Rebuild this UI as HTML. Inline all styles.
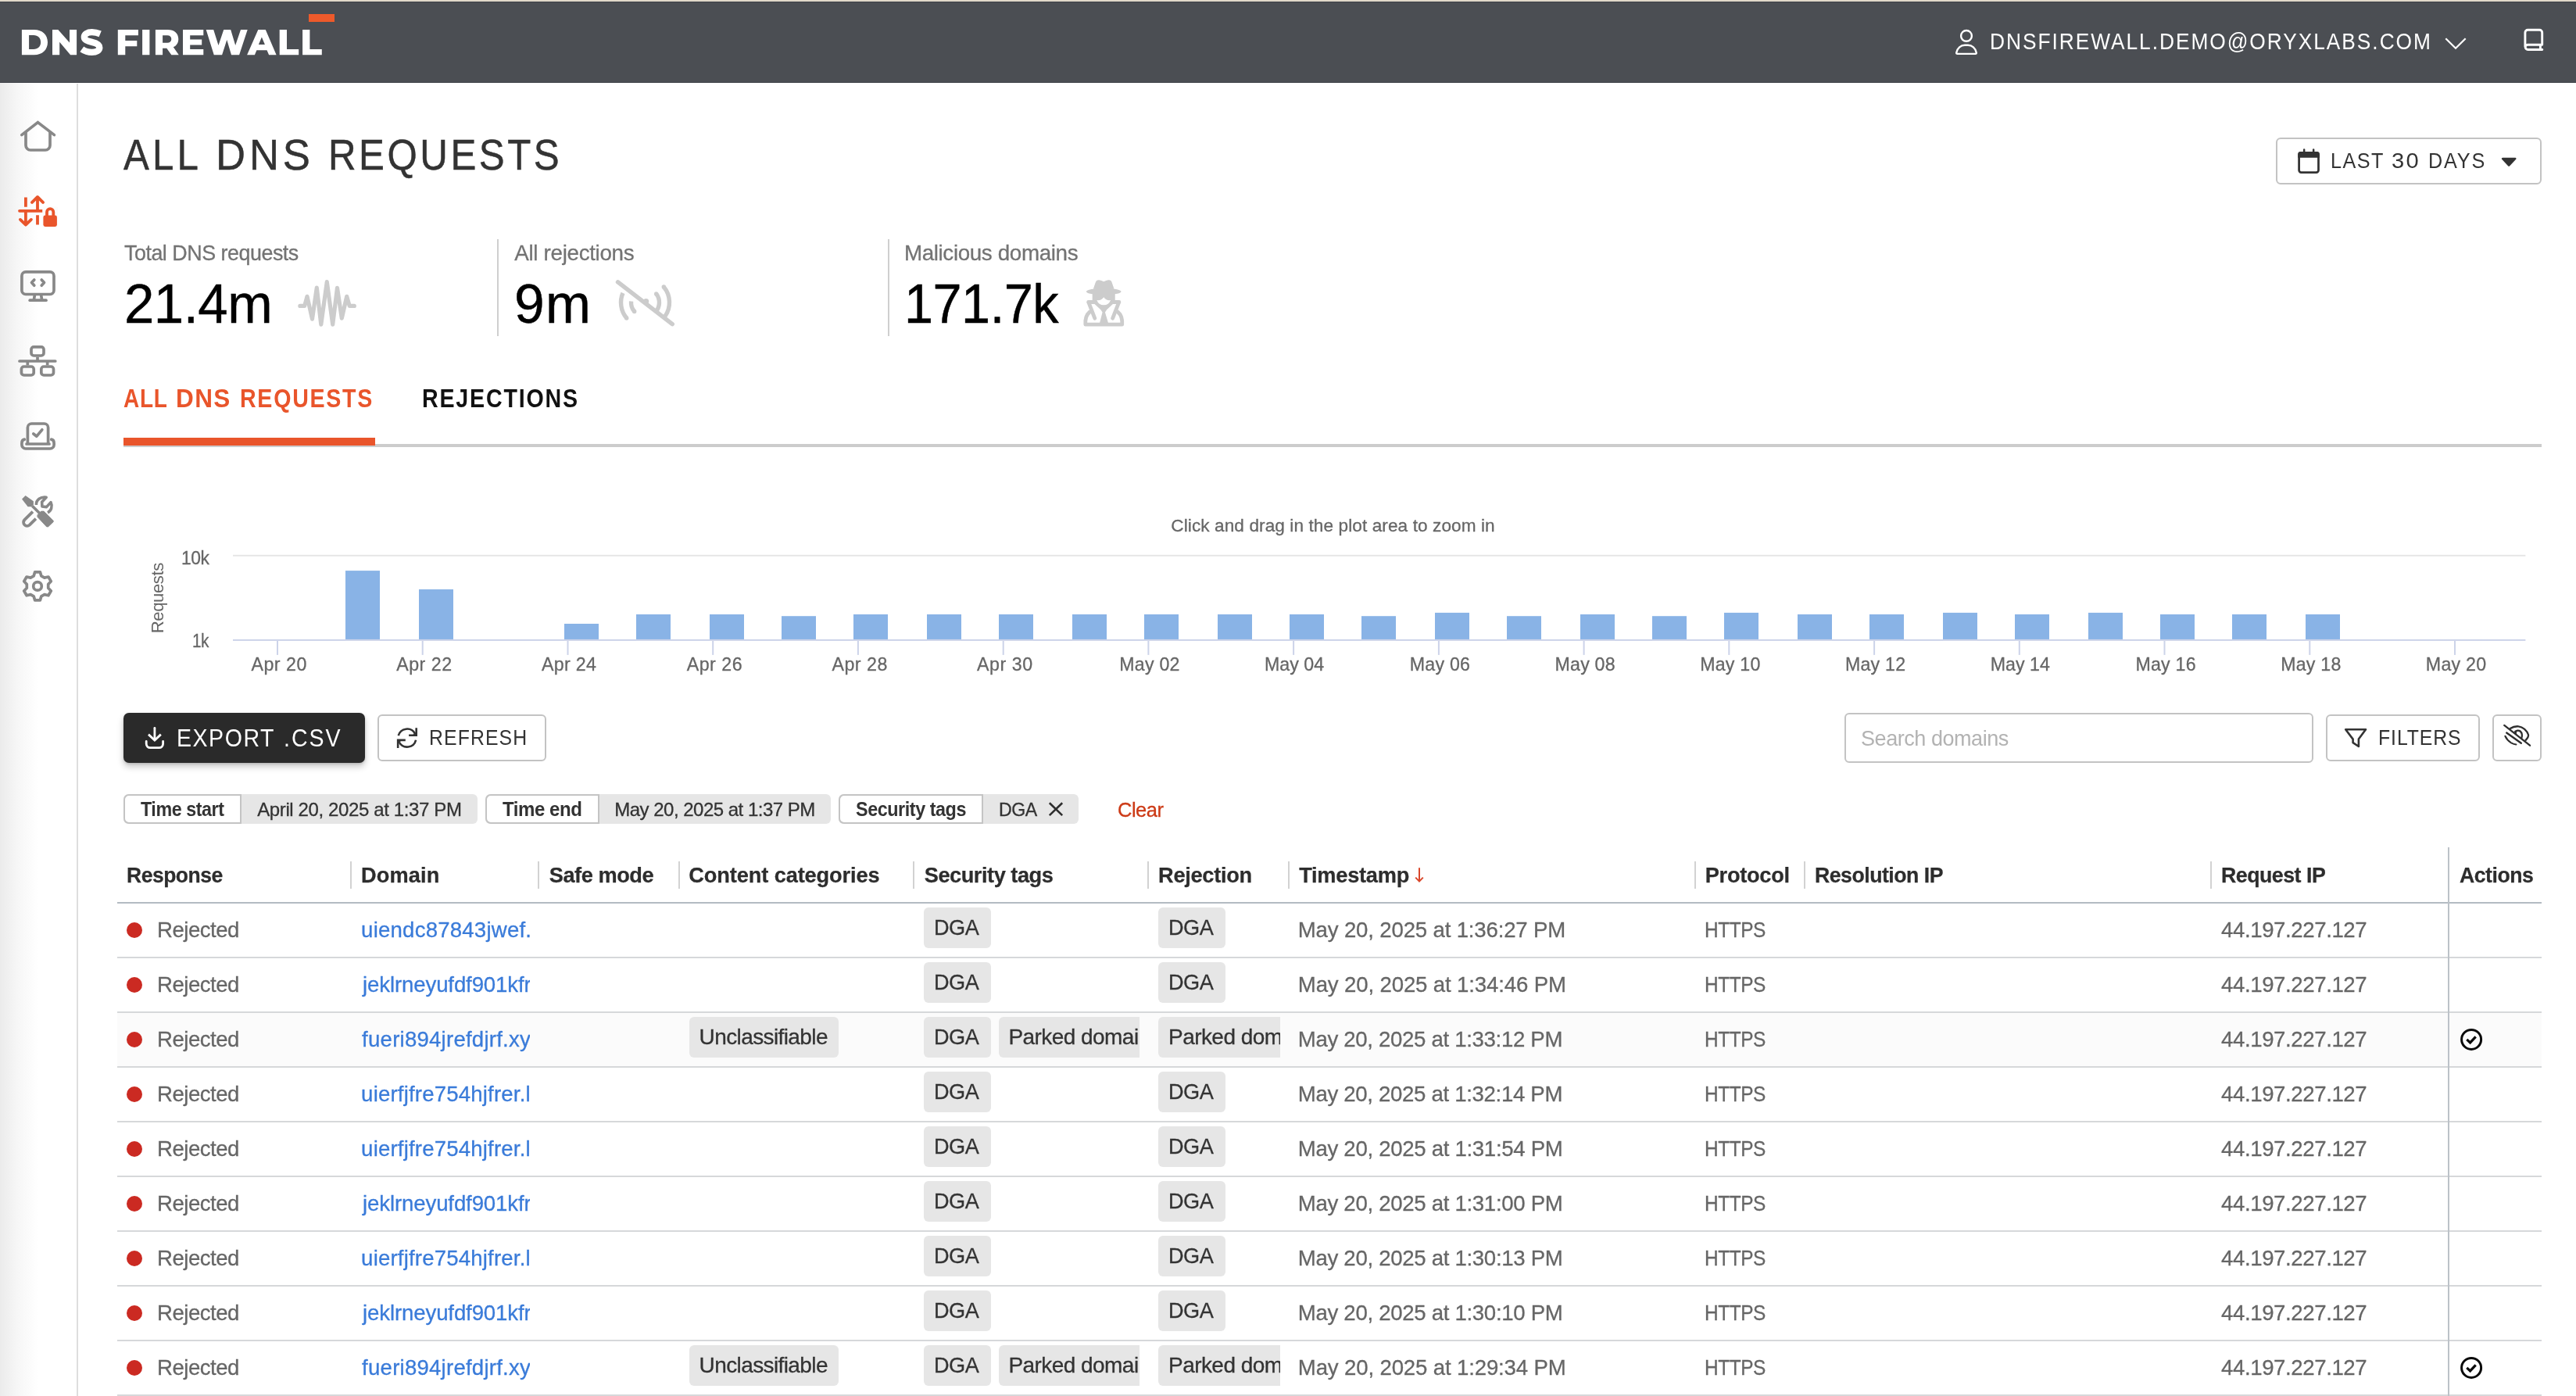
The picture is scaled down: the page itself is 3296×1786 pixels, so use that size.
<!DOCTYPE html><html lang="en"><head><meta charset="utf-8"><title>DNS Firewall - All DNS Requests</title><style>
*{box-sizing:border-box}
html,body{margin:0;padding:0}
body{width:3296px;height:1786px;overflow:hidden;background:#fff;font-family:"Liberation Sans",sans-serif;position:relative}
.a{position:absolute}
.t{position:absolute;white-space:nowrap;line-height:1}
.clip{position:absolute;overflow:hidden}
.btn{position:absolute;border:2px solid #c3c3c3;border-radius:6px;background:#fff}
.tag{position:absolute;background:#e6e6e6;border-radius:6px;height:51.5px}
.sep{position:absolute;width:2px;background:#d2d2d2;top:1102px;height:35px}
.rl{position:absolute;left:150px;width:3102px;height:2px;background:#d6d8da}
svg{position:absolute;left:0;top:0;overflow:visible;will-change:transform}
</style></head><body><header class="a" style="left:0;top:0;width:3296px;height:106px;background:#4b4e53;border-bottom:1px solid #3f4248"></header><div class="a" style="left:0px;top:0px;width:3296px;height:2px;background:linear-gradient(#ddd4c5,#e8dfd0)"></div><div class="a" style="left:0px;top:2px;width:3296px;height:1px;background:#3d4046"></div><div class="a" style="left:394.9px;top:18px;width:33.1px;height:9.7px;background:#ee5a2b"></div><nav class="a" style="left:0;top:106px;width:98px;height:1680px;background:linear-gradient(90deg,#ebebeb 0%,#f6f6f6 22%,#fff 50%)"></nav><div class="a" style="left:98px;top:107px;width:2px;height:1679px;background:#dedede"></div><div class="btn" style="left:2912px;top:176px;width:340px;height:60px;"></div><div class="a" style="left:636px;top:306px;width:2px;height:124px;background:#cfcfcf"></div><div class="a" style="left:1136px;top:306px;width:2px;height:124px;background:#cfcfcf"></div><div class="a" style="left:158px;top:568.2px;width:3094px;height:4px;background:#cccccc"></div><div class="a" style="left:158px;top:560px;width:322px;height:9.8px;background:#e9552b"></div><div class="a" style="left:158px;top:912px;width:309px;height:64px;background:#2a2a2a;border-radius:7px;box-shadow:0 5px 9px rgba(0,0,0,.22),0 1px 3px rgba(0,0,0,.15)"></div><div class="btn" style="left:483px;top:914px;width:216px;height:60px;"></div><div class="btn" style="left:2360px;top:912px;width:600px;height:64px;"></div><div class="btn" style="left:2976px;top:914px;width:197px;height:60px;"></div><div class="btn" style="left:3189px;top:914px;width:63px;height:60px;"></div><div class="a" style="left:158px;top:1016px;width:453px;height:38px;background:#e6e6e6;border-radius:6px"></div><div class="a" style="left:158px;top:1016px;width:151px;height:38px;background:#fff;border:2px solid #c4c4c4;border-radius:7px 0 0 7px"></div><div class="a" style="left:621px;top:1016px;width:442.29999999999995px;height:38px;background:#e6e6e6;border-radius:6px"></div><div class="a" style="left:621px;top:1016px;width:145.5px;height:38px;background:#fff;border:2px solid #c4c4c4;border-radius:7px 0 0 7px"></div><div class="a" style="left:1073.3px;top:1016px;width:306.70000000000005px;height:38px;background:#e6e6e6;border-radius:6px"></div><div class="a" style="left:1073.3px;top:1016px;width:184.4000000000001px;height:38px;background:#fff;border:2px solid #c4c4c4;border-radius:7px 0 0 7px"></div><div class="sep" style="left:448px"></div><div class="sep" style="left:688px"></div><div class="sep" style="left:868px"></div><div class="sep" style="left:1168px"></div><div class="sep" style="left:1468px"></div><div class="sep" style="left:1648px"></div><div class="sep" style="left:2168px"></div><div class="sep" style="left:2308px"></div><div class="sep" style="left:2828px"></div><div class="a" style="left:150px;top:1296px;width:3102px;height:69px;background:#fbfbfb"></div><div class="a" style="left:150px;top:1154px;width:3102px;height:2px;background:#b3bbc2"></div><div class="rl" style="top:1224px"></div><div class="rl" style="top:1294px"></div><div class="rl" style="top:1364px"></div><div class="rl" style="top:1434px"></div><div class="rl" style="top:1504px"></div><div class="rl" style="top:1574px"></div><div class="rl" style="top:1644px"></div><div class="rl" style="top:1714px"></div><div class="rl" style="top:1784px"></div><div class="a" style="left:3132px;top:1084px;width:2px;height:702px;background:#bcc2c8"></div><div class="a" style="left:161.8px;top:1179.8px;width:20.4px;height:20.4px;background:#cb2a22;border-radius:50%"></div><div class="tag" style="left:1182.2px;top:1161.2px;width:85.7px"></div><div class="tag" style="left:1482.1px;top:1161.2px;width:85.7px"></div><div class="a" style="left:161.8px;top:1249.8px;width:20.4px;height:20.4px;background:#cb2a22;border-radius:50%"></div><div class="tag" style="left:1182.2px;top:1231.2px;width:85.7px"></div><div class="tag" style="left:1482.1px;top:1231.2px;width:85.7px"></div><div class="a" style="left:161.8px;top:1319.8px;width:20.4px;height:20.4px;background:#cb2a22;border-radius:50%"></div><div class="tag" style="left:1182.2px;top:1301.2px;width:85.7px"></div><div class="tag" style="left:882.1px;top:1301.2px;width:190.5px"></div><div class="tag" style="left:1277.9px;top:1301.2px;width:179.8px;border-radius:6px 0 0 6px"></div><div class="tag" style="left:1482.1px;top:1301.2px;width:155.8px;border-radius:6px 0 0 6px"></div><div class="a" style="left:161.8px;top:1389.8px;width:20.4px;height:20.4px;background:#cb2a22;border-radius:50%"></div><div class="tag" style="left:1182.2px;top:1371.2px;width:85.7px"></div><div class="tag" style="left:1482.1px;top:1371.2px;width:85.7px"></div><div class="a" style="left:161.8px;top:1459.8px;width:20.4px;height:20.4px;background:#cb2a22;border-radius:50%"></div><div class="tag" style="left:1182.2px;top:1441.2px;width:85.7px"></div><div class="tag" style="left:1482.1px;top:1441.2px;width:85.7px"></div><div class="a" style="left:161.8px;top:1529.8px;width:20.4px;height:20.4px;background:#cb2a22;border-radius:50%"></div><div class="tag" style="left:1182.2px;top:1511.2px;width:85.7px"></div><div class="tag" style="left:1482.1px;top:1511.2px;width:85.7px"></div><div class="a" style="left:161.8px;top:1599.8px;width:20.4px;height:20.4px;background:#cb2a22;border-radius:50%"></div><div class="tag" style="left:1182.2px;top:1581.2px;width:85.7px"></div><div class="tag" style="left:1482.1px;top:1581.2px;width:85.7px"></div><div class="a" style="left:161.8px;top:1669.8px;width:20.4px;height:20.4px;background:#cb2a22;border-radius:50%"></div><div class="tag" style="left:1182.2px;top:1651.2px;width:85.7px"></div><div class="tag" style="left:1482.1px;top:1651.2px;width:85.7px"></div><div class="a" style="left:161.8px;top:1739.8px;width:20.4px;height:20.4px;background:#cb2a22;border-radius:50%"></div><div class="tag" style="left:1182.2px;top:1721.2px;width:85.7px"></div><div class="tag" style="left:882.1px;top:1721.2px;width:190.5px"></div><div class="tag" style="left:1277.9px;top:1721.2px;width:179.8px;border-radius:6px 0 0 6px"></div><div class="tag" style="left:1482.1px;top:1721.2px;width:155.8px;border-radius:6px 0 0 6px"></div><svg width="3296" height="1786" viewBox="0 0 3296 1786"><path fill="#fff" fill-rule="evenodd" d="M27.9,37.9 H43.6 C54.2,37.9 61,44.4 61,54.1 C61,63.8 54.2,70.3 43.6,70.3 H27.9 Z M37.1,45 V63 H43 C48.6,63 52.1,59.6 52.1,54.1 C52.1,48.5 48.6,45 43,45 Z M67,37.9 H74.35 L89,54.6 V37.9 H98.1 V70.3 H90.1 L76.2,53.8 V70.3 H67 Z M150.8,37.9 H176.9 V45.2 H160.3 V52 H175.3 V59.3 H160.3 V70.3 H150.8 Z M182.1,37.9 H191.4 V70.3 H182.1 Z M198.9,37.9 H214.5 C223,37.9 228.3,42.6 228.3,49.9 C228.3,54.8 225.8,58.4 221.8,60.3 L228.8,70.3 H219.3 L213.3,61.7 H208.1 V70.3 H198.9 Z M208.1,45.2 V54.7 H214 C217.3,54.7 219.3,52.9 219.3,49.95 C219.3,47 217.3,45.2 214,45.2 Z M234,37.9 H260.3 V45.2 H243.2 V50.4 H258.2 V57.4 H243.2 V62.9 H260.3 V70.3 H234 Z M263.7,37.9 H273.2 L279.5,58 L286.25,37.9 H295.2 L301.2,58 L308,37.9 H316.7 L306.1,70.3 H296 L290.3,50.9 L284.1,70.3 H273.75 Z M330.3,37.9 H339.8 L353.6,70.3 H344.1 L341.5,64.2 H328.4 L325.9,70.3 H316.1 Z M334.9,47.4 L330.9,56.9 H338.9 Z M357.7,37.9 H367 V62.9 H382.2 V70.3 H357.7 Z M387.1,37.9 H396.4 V62.9 H411.8 V70.3 H387.1 Z"/><path d="M128.2,43.4 C124.8,42 121.2,41.2 117.6,41.2 C111.5,41.2 107.8,43.7 107.8,47.3 C107.8,51.1 111.6,52.5 117.5,53.9 C123.6,55.3 127.3,57 127.3,60.9 C127.3,64.5 123.5,66.9 117.5,66.9 C113,66.9 108.4,65.5 104.8,62.9" fill="none" stroke="#fff" stroke-width="8.3" stroke-linecap="butt" stroke-linejoin="round" /><circle cx="2516" cy="45.9" r="6.9" fill="none" stroke="#fff" stroke-width="2.4"/><path d="M2503.2,67.5 C2504.2,61.5 2509,57.7 2514,57.7 H2518 C2523,57.7 2527.8,61.5 2528.8,67.5 Q2529,68.9 2527.6,68.9 H2504.4 Q2503,68.9 2503.2,67.5 Z" fill="none" stroke="#fff" stroke-width="2.4" stroke-linecap="round" stroke-linejoin="round" /><path d="M3129.3,49.3 L3142,61.7 L3154.7,49.3" fill="none" stroke="#fff" stroke-width="2.3" stroke-linecap="butt" stroke-linejoin="miter" /><path d="M3230.9,59.8 V41.7 a3.4,3.4 0 0 1 3.4,-3.4 H3249.3 a3.4,3.4 0 0 1 3.4,3.4 V57.2 H3234.3 a3.15,3.15 0 0 0 0,6.3 H3252.8 M3250.4,57.2 V63.5" fill="none" stroke="#fff" stroke-width="2.9" stroke-linecap="round" stroke-linejoin="round" /><path d="M27.8,172.6 L48.4,156.6 L69.4,172.6" fill="none" stroke="#888888" stroke-width="3.7" stroke-linecap="round" stroke-linejoin="miter" /><path d="M33,168.5 V186 a6,6 0 0 0 6,6 H58 a6,6 0 0 0 6,-6 V168.5" fill="none" stroke="#888888" stroke-width="3.7" stroke-linecap="butt" stroke-linejoin="round" /><path d="M32.9,252.6 V264.8 M48,275.2 V287.6" fill="none" stroke="#e9552b" stroke-width="3.8" stroke-linecap="butt" stroke-linejoin="round" /><path d="M25,269.85 H55.5" fill="none" stroke="#e9552b" stroke-width="3.8" stroke-linecap="round" stroke-linejoin="round" /><path d="M32.9,271 V287.4 M25.9,280.9 L32.9,287.7 L39.9,280.9" fill="none" stroke="#e9552b" stroke-width="3.8" stroke-linecap="round" stroke-linejoin="round" /><path d="M48,269 V252.2 M41,258.9 L48,251.9 L55,258.9" fill="none" stroke="#e9552b" stroke-width="3.8" stroke-linecap="round" stroke-linejoin="round" /><rect x="54.2" y="264" width="19.9" height="27" rx="3" fill="#fcfcfc"/><rect x="55.4" y="275.6" width="17.5" height="14.3" rx="2.4" fill="#e9552b"/><path d="M60,277 V271.2 a4.15,4.15 0 0 1 8.3,0 V277" fill="none" stroke="#e9552b" stroke-width="3.8" stroke-linecap="butt" stroke-linejoin="round" /><rect x="27.9" y="347.9" width="41.1" height="28.6" rx="5" fill="none" stroke="#888888" stroke-width="3.7"/><path d="M44.4,377.5 L43.4,383.5 M52.6,377.5 L53.6,383.5" fill="none" stroke="#888888" stroke-width="3.7" stroke-linecap="butt" stroke-linejoin="round" /><path d="M38.2,384.2 H59" fill="none" stroke="#888888" stroke-width="3.7" stroke-linecap="round" stroke-linejoin="round" /><path d="M43.8,358 L40.5,361.6 L43.8,365.2 M53.2,358 L56.5,361.6 L53.2,365.2" fill="none" stroke="#888888" stroke-width="3.7" stroke-linecap="round" stroke-linejoin="round" /><rect x="40" y="443.9" width="16" height="11.1" rx="3.2" fill="none" stroke="#888888" stroke-width="3.7"/><rect x="27.4" y="469" width="15.8" height="11" rx="3.2" fill="none" stroke="#888888" stroke-width="3.7"/><rect x="52.8" y="469" width="15.7" height="11" rx="3.2" fill="none" stroke="#888888" stroke-width="3.7"/><path d="M25,462 H70.8" fill="none" stroke="#888888" stroke-width="3.7" stroke-linecap="round" stroke-linejoin="round" /><path d="M48,456.8 V462 M35.3,462 V467.2 M60.65,462 V467.2" fill="none" stroke="#888888" stroke-width="3.7" stroke-linecap="butt" stroke-linejoin="round" /><path d="M35.4,568 V547 a5,5 0 0 1 5,-5 H56.6 a5,5 0 0 1 5,5 V568" fill="none" stroke="#888888" stroke-width="3.7" stroke-linecap="butt" stroke-linejoin="round" /><path d="M34,568 H63" fill="none" stroke="#888888" stroke-width="3.7" stroke-linecap="round" stroke-linejoin="round" /><path d="M42.8,555 L46.9,558.2 L53.8,549.8" fill="none" stroke="#888888" stroke-width="3.7" stroke-linecap="round" stroke-linejoin="round" /><path d="M31.3,562.2 C28.6,562.6 27.9,565 27.9,567 V569 a5,5 0 0 0 5,5 H64.1 a5,5 0 0 0 5,-5 V567 C69.1,565 68.4,562.6 65.7,562.2" fill="none" stroke="#888888" stroke-width="3.7" stroke-linecap="round" stroke-linejoin="round" /><path d="M28.05,638.6 L32.6,634.05 L42.85,641.3 L42.85,645.85 L40.1,648.35 L35.6,648.35 Z" fill="#888888" /><path d="M41.2,647.2 L50.6,656.6" fill="none" stroke="#888888" stroke-width="3.6" stroke-linecap="butt" stroke-linejoin="round" /><path d="M48.1,658.6 L52.6,654.1 L56.1,654.1 L68.2,666.15 L68.2,667.7 L61.65,673.9 L59.65,673.9 L48.1,661.6 Z" fill="#888888" stroke="#888888" stroke-width="0.8" stroke-linecap="round" stroke-linejoin="round" /><path d="M41.9,654.7 L31.3,665.1 a4.6,4.6 0 0 0 6.5,6.5 L45.9,663.6" fill="none" stroke="#888888" stroke-width="3.8" stroke-linecap="butt" stroke-linejoin="round" /><path d="M46.4,646 C46,639.5 52,635.2 59.2,636.2 L53.6,642.2 L53.9,648 L59.5,648.6 L65,642.6 C67.6,648 65.5,653.5 61,655.8" fill="none" stroke="#888888" stroke-width="3.6" stroke-linecap="butt" stroke-linejoin="round" /><path d="M43.13,736.88 L44.67,731.91 L51.33,731.91 L52.87,736.88 L56.84,739.17 L61.92,738.02 L65.25,743.79 L61.71,747.61 L61.71,752.19 L65.25,756.01 L61.92,761.78 L56.84,760.63 L52.87,762.92 L51.33,767.89 L44.67,767.89 L43.13,762.92 L39.16,760.63 L34.08,761.78 L30.75,756.01 L34.29,752.19 L34.29,747.61 L30.75,743.79 L34.08,738.02 L39.16,739.17 Z" fill="none" stroke="#888888" stroke-width="3.7" stroke-linecap="round" stroke-linejoin="round" /><circle cx="48" cy="749.9" r="5.3" fill="none" stroke="#888888" stroke-width="3.7"/><rect x="2941.6" y="195.4" width="24.9" height="25.2" rx="2.8" fill="none" stroke="#333" stroke-width="2.76"/><path d="M2940.2,201.8 V197.2 a3.2,3.2 0 0 1 3.2,-3.2 H2964.7 a3.2,3.2 0 0 1 3.2,3.2 V201.8 Z" fill="#333" /><path d="M2948.15,191.4 V195 M2960.15,191.4 V195" fill="none" stroke="#333" stroke-width="2.5" stroke-linecap="round" stroke-linejoin="round" /><path d="M3202,203 H3218.3 L3210.15,211.6 Z" fill="#333" stroke="#333" stroke-width="2.4" stroke-linecap="round" stroke-linejoin="round" /><path d="M383.9,391.4 L389.7,391.4 L393,379.3 L399.5,408.2 L405.3,368 L410.8,415.2 L418.3,360.7 L425.7,415.2 L431.5,368.3 L437.3,407.2 L443.7,379.3 L447.2,391.4 L453.3,391.4" fill="none" stroke="#cccccc" stroke-width="5.2" stroke-linecap="round" stroke-linejoin="round" /><path d="M796.96,374.89 A31,31 0 0 0 801.75,406.93" fill="none" stroke="#cccccc" stroke-width="5.4" stroke-linecap="butt" stroke-linejoin="round" /><path d="M807.57,385.43 A18,18 0 0 0 811.71,398.57" fill="none" stroke="#cccccc" stroke-width="5.4" stroke-linecap="butt" stroke-linejoin="round" /><path d="M849.25,367.07 A31,31 0 0 1 850.89,404.78" fill="none" stroke="#cccccc" stroke-width="5.4" stroke-linecap="butt" stroke-linejoin="round" /><path d="M839.68,375.92 A18,18 0 0 1 838.88,399.04" fill="none" stroke="#cccccc" stroke-width="5.4" stroke-linecap="butt" stroke-linejoin="round" /><circle cx="801.75" cy="406.93" r="2.7" fill="#cccccc"/><circle cx="811.71" cy="398.57" r="2.7" fill="#cccccc"/><circle cx="849.25" cy="367.07" r="2.7" fill="#cccccc"/><circle cx="839.68" cy="375.92" r="2.7" fill="#cccccc"/><circle cx="826.6" cy="385.6" r="3.6" fill="#cccccc"/><path d="M790.6,360.9 L860.2,414.6" fill="none" stroke="#cccccc" stroke-width="5.6" stroke-linecap="round" stroke-linejoin="round" /><path d="M1398.81,369.78 L1401.67,361.47 Q1402.93,357.74 1406.37,358.20 Q1409.24,358.89 1412.22,360.32 Q1415.20,358.89 1418.18,358.20 Q1421.56,357.74 1422.70,361.47 L1425.57,369.78 Z" fill="#cccccc" /><ellipse cx="1412.22" cy="372.99" rx="22.35" ry="4.36" fill="#cccccc"/><path d="M1397.66,374.93 H1426.72 V385.82 H1397.66 Z" fill="#cccccc" /><path d="M1398.92,387.54 L1425.57,387.54 L1416.11,396.14 L1413.94,399.58 L1417.95,413.04 L1407.12,413.04 L1410.56,399.58 L1408.38,396.14 Z" fill="#cccccc" /><path d="M1392.62,386.51 L1431.87,386.51" fill="none" stroke="#cccccc" stroke-width="4.813753581661891" stroke-linecap="round" stroke-linejoin="round" /><path d="M1393.19,387.54 L1400.76,407.14 M1431.30,387.54 L1423.68,407.14" fill="none" stroke="#cccccc" stroke-width="4.813753581661891" stroke-linecap="round" stroke-linejoin="round" /><path d="M1394.22,399.12 C1389.30,403.30 1388.49,409.89 1388.84,415.16 L1435.71,415.16 C1436.06,409.89 1435.26,403.30 1430.33,399.12" fill="none" stroke="#cccccc" stroke-width="4.813753581661891" stroke-linecap="round" stroke-linejoin="round" /><path d="M1403.39,383.99 Q1408.66,384.96 1412.22,380.21 Q1415.77,384.96 1421.04,383.99 Q1418.69,390.29 1412.22,390.29 Q1405.74,390.29 1403.39,383.99 Z" fill="#fff" /><rect x="298" y="709.8" width="2933.4" height="2" fill="#e6e6e6"/><rect x="442" y="730.1" width="44" height="87.9" fill="#89b3e6"/><rect x="536" y="754" width="44" height="64.0" fill="#89b3e6"/><rect x="722" y="798" width="44" height="20.0" fill="#89b3e6"/><rect x="814" y="786" width="44" height="32.0" fill="#89b3e6"/><rect x="908" y="786" width="44" height="32.0" fill="#89b3e6"/><rect x="1000" y="788.2" width="44" height="29.8" fill="#89b3e6"/><rect x="1092" y="786" width="44" height="32.0" fill="#89b3e6"/><rect x="1186" y="786" width="44" height="32.0" fill="#89b3e6"/><rect x="1278" y="786" width="44" height="32.0" fill="#89b3e6"/><rect x="1372" y="786" width="44" height="32.0" fill="#89b3e6"/><rect x="1464" y="786" width="44" height="32.0" fill="#89b3e6"/><rect x="1558" y="786" width="44" height="32.0" fill="#89b3e6"/><rect x="1650" y="786" width="44" height="32.0" fill="#89b3e6"/><rect x="1742" y="788.2" width="44" height="29.8" fill="#89b3e6"/><rect x="1836" y="783.9" width="44" height="34.1" fill="#89b3e6"/><rect x="1928" y="788.2" width="44" height="29.8" fill="#89b3e6"/><rect x="2022" y="786" width="44" height="32.0" fill="#89b3e6"/><rect x="2114" y="788.2" width="44" height="29.8" fill="#89b3e6"/><rect x="2206" y="783.9" width="44" height="34.1" fill="#89b3e6"/><rect x="2300" y="786" width="44" height="32.0" fill="#89b3e6"/><rect x="2392" y="786" width="44" height="32.0" fill="#89b3e6"/><rect x="2486" y="783.9" width="44" height="34.1" fill="#89b3e6"/><rect x="2578" y="786" width="44" height="32.0" fill="#89b3e6"/><rect x="2672" y="783.9" width="44" height="34.1" fill="#89b3e6"/><rect x="2764" y="786" width="44" height="32.0" fill="#89b3e6"/><rect x="2856" y="786" width="44" height="32.0" fill="#89b3e6"/><rect x="2950" y="786" width="44" height="32.0" fill="#89b3e6"/><rect x="298" y="817.9" width="2933.4" height="2" fill="#ccd3e9"/><rect x="354.0" y="819.9" width="2" height="18" fill="#ccd3e9"/><rect x="539.7" y="819.9" width="2" height="18" fill="#ccd3e9"/><rect x="725.5" y="819.9" width="2" height="18" fill="#ccd3e9"/><rect x="911.2" y="819.9" width="2" height="18" fill="#ccd3e9"/><rect x="1096.9" y="819.9" width="2" height="18" fill="#ccd3e9"/><rect x="1282.7" y="819.9" width="2" height="18" fill="#ccd3e9"/><rect x="1468.4" y="819.9" width="2" height="18" fill="#ccd3e9"/><rect x="1654.1" y="819.9" width="2" height="18" fill="#ccd3e9"/><rect x="1839.9" y="819.9" width="2" height="18" fill="#ccd3e9"/><rect x="2025.6" y="819.9" width="2" height="18" fill="#ccd3e9"/><rect x="2211.3" y="819.9" width="2" height="18" fill="#ccd3e9"/><rect x="2397.1" y="819.9" width="2" height="18" fill="#ccd3e9"/><rect x="2582.8" y="819.9" width="2" height="18" fill="#ccd3e9"/><rect x="2768.5" y="819.9" width="2" height="18" fill="#ccd3e9"/><rect x="2954.3" y="819.9" width="2" height="18" fill="#ccd3e9"/><rect x="3140.0" y="819.9" width="2" height="18" fill="#ccd3e9"/><text transform="translate(208.5,765) rotate(-90)" text-anchor="middle" font-family="Liberation Sans" font-size="22.2" fill="#666" textLength="90.7" lengthAdjust="spacing">Requests</text><path d="M197.9,931.3 V946" fill="none" stroke="#fff" stroke-width="2.8" stroke-linecap="round" stroke-linejoin="round" /><path d="M191,940.6 L197.9,947 L204.8,940.6" fill="none" stroke="#fff" stroke-width="2.8" stroke-linecap="square" stroke-linejoin="miter" /><path d="M187.2,948.4 V951.6 a5,5 0 0 0 5,5 H203.6 a5,5 0 0 0 5,-5 V948.4" fill="none" stroke="#fff" stroke-width="2.8" stroke-linecap="round" stroke-linejoin="round" /><path d="M509.79,941.12 A11.5,11.5 0 0 1 530.96,938.52" fill="none" stroke="#333" stroke-width="2.6" stroke-linecap="butt" stroke-linejoin="round" /><path d="M532.11,946.69 A11.5,11.5 0 0 1 510.75,949.50" fill="none" stroke="#333" stroke-width="2.6" stroke-linecap="butt" stroke-linejoin="round" /><path d="M532.7,931.2 V940.8 H523.1" fill="none" stroke="#333" stroke-width="2.6" stroke-linecap="butt" stroke-linejoin="miter" /><path d="M509.15,956.9 V946.9 H518.8" fill="none" stroke="#333" stroke-width="2.6" stroke-linecap="butt" stroke-linejoin="miter" /><path d="M532.7,940.8 L532.7,936.5 L529.5,939 L527.5,940.8 Z M509.15,946.9 L509.15,951 L512,949 L514,946.9 Z" fill="#333" /><path d="M3001.2,933.3 H3027 L3017.9,945.6 V955 L3010.6,950.2 V945.6 Z" fill="none" stroke="#333" stroke-width="2.6" stroke-linecap="round" stroke-linejoin="round" /><path d="M3204.2,927.9 L3237,953.7" fill="none" stroke="#2e2e2e" stroke-width="2.3" stroke-linecap="round" stroke-linejoin="round" /><path d="M3211.3,932.3 C3215,930 3219,929 3222.3,929.3 C3228.2,929.9 3233.2,934.6 3235,940 C3235.6,942.6 3233.2,945.4 3231,947.6" fill="none" stroke="#2e2e2e" stroke-width="2.3" stroke-linecap="butt" stroke-linejoin="round" /><path d="M3217.6,936.3 C3219.5,934.6 3222.6,934 3224.6,935.5 C3227,937.5 3227.4,941.5 3226.2,944.6" fill="none" stroke="#2e2e2e" stroke-width="2.4" stroke-linecap="butt" stroke-linejoin="round" /><path d="M3215.2,936.9 L3220,935.4 L3220,940.4 Z" fill="#2e2e2e" /><path d="M3207.2,937.6 L3225.8,950.8" fill="none" stroke="#2e2e2e" stroke-width="2.4" stroke-linecap="round" stroke-linejoin="round" /><path d="M3205.4,941.8 C3207,945.4 3210,948.5 3213,950.3 C3215.4,951.6 3217.5,952.3 3219.4,952.5" fill="none" stroke="#2e2e2e" stroke-width="2.1" stroke-linecap="round" stroke-linejoin="round" /><path d="M1342.8,1027.3 L1359.2,1043.1 M1359.2,1027.3 L1342.8,1043.1" fill="none" stroke="#2e2e2e" stroke-width="2.6" stroke-linecap="butt" stroke-linejoin="round" /><path d="M1816,1110.2 V1127.4 M1811.2,1122.6 L1816,1127.6 L1820.8,1122.6" fill="none" stroke="#d9472b" stroke-width="2" stroke-linecap="butt" stroke-linejoin="miter" /><circle cx="3162.1" cy="1329.9" r="12.5" fill="none" stroke="#0a0a0a" stroke-width="3"/><path d="M3156.3,1329.8 L3160.6,1333.9 L3167.7,1326.3" fill="none" stroke="#0a0a0a" stroke-width="3.2" stroke-linecap="butt" stroke-linejoin="miter" /><circle cx="3162.1" cy="1749.9" r="12.5" fill="none" stroke="#0a0a0a" stroke-width="3"/><path d="M3156.3,1749.8 L3160.6,1753.9 L3167.7,1746.3" fill="none" stroke="#0a0a0a" stroke-width="3.2" stroke-linecap="butt" stroke-linejoin="miter" /></svg><main style="position:absolute;left:0;top:0;width:3296px;height:1786px;will-change:transform"><span class="t" style="left:2545.86px;top:39px;font-size:28.6px;color:#fff;letter-spacing:2.129px;transform:scaleX(0.9200);transform-origin:0 0;">DNSFIREWALL.DEMO@ORYXLABS.COM</span><span class="t" style="left:158.00px;top:170px;font-size:56px;color:#333;letter-spacing:4.616px;transform:scaleX(0.8800);transform-origin:0 0;-webkit-text-stroke:0.5px #333;">ALL</span><span class="t" style="left:275.99px;top:170px;font-size:56px;color:#333;letter-spacing:5.202px;transform:scaleX(0.9400);transform-origin:0 0;-webkit-text-stroke:0.5px #333;">DNS</span><span class="t" style="left:419.68px;top:170px;font-size:56px;color:#333;letter-spacing:3.994px;transform:scaleX(0.8800);transform-origin:0 0;-webkit-text-stroke:0.5px #333;">REQUESTS</span><span class="t" style="left:2981.50px;top:192px;font-size:28px;color:#333;letter-spacing:1.618px;transform:scaleX(0.9000);transform-origin:0 0;">LAST</span><span class="t" style="left:3060.36px;top:192px;font-size:28px;color:#333;letter-spacing:2.255px;transform:scaleX(1.0400);transform-origin:0 0;">30</span><span class="t" style="left:3106.50px;top:192px;font-size:28px;color:#333;letter-spacing:2.058px;transform:scaleX(0.9000);transform-origin:0 0;">DAYS</span><span class="t" style="left:158.50px;top:310px;font-size:27.8px;color:#737373;letter-spacing:-0.500px;transform:scaleX(0.9667);transform-origin:0 0;-webkit-text-stroke:0.3px #737373;">Total DNS requests</span><span class="t" style="left:658.30px;top:310px;font-size:27.8px;color:#737373;letter-spacing:-0.329px;-webkit-text-stroke:0.3px #737373;">All rejections</span><span class="t" style="left:1156.90px;top:310px;font-size:27.8px;color:#737373;letter-spacing:-0.372px;-webkit-text-stroke:0.3px #737373;">Malicious domains</span><span class="t" style="left:158.82px;top:355px;font-size:69.5px;color:#000;letter-spacing:-0.500px;transform:scaleX(0.9920);transform-origin:0 0;-webkit-text-stroke:0.45px #000;">21.4m</span><span class="t" style="left:657.90px;top:355px;font-size:69.5px;color:#000;letter-spacing:1.447px;-webkit-text-stroke:0.45px #000;">9m</span><span class="t" style="left:1157.21px;top:355px;font-size:69.5px;color:#000;letter-spacing:-0.500px;transform:scaleX(0.9582);transform-origin:0 0;-webkit-text-stroke:0.45px #000;">171.7k</span><span class="t" style="left:157.50px;top:494px;font-size:32.5px;color:#e9552b;font-weight:bold;letter-spacing:0.932px;transform:scaleX(0.8600);transform-origin:0 0;">ALL</span><span class="t" style="left:224.96px;top:494px;font-size:32.5px;color:#e9552b;font-weight:bold;letter-spacing:1.463px;transform:scaleX(0.9700);transform-origin:0 0;">DNS</span><span class="t" style="left:307.34px;top:494px;font-size:32.5px;color:#e9552b;font-weight:bold;letter-spacing:1.953px;transform:scaleX(0.8800);transform-origin:0 0;">REQUESTS</span><span class="t" style="left:539.74px;top:494px;font-size:32.5px;color:#111;font-weight:bold;letter-spacing:2.058px;transform:scaleX(0.8800);transform-origin:0 0;">REJECTIONS</span><span class="t" style="left:1498.30px;top:662px;font-size:22.6px;color:#666666;letter-spacing:0.090px;-webkit-text-stroke:0.3px #666666;">Click and drag in the plot area to zoom in</span><span class="t" style="left:231.63px;top:703px;font-size:23.5px;color:#666666;letter-spacing:-0.500px;transform:scaleX(0.9712);transform-origin:0 0;-webkit-text-stroke:0.3px #666666;">10k</span><span class="t" style="left:246.02px;top:809px;font-size:23.5px;color:#666666;letter-spacing:-0.500px;transform:scaleX(0.8825);transform-origin:0 0;-webkit-text-stroke:0.3px #666666;">1k</span><span class="t" style="left:321.45px;top:839px;font-size:23.2px;color:#666666;letter-spacing:0.536px;-webkit-text-stroke:0.3px #666666;">Apr 20</span><span class="t" style="left:507.18px;top:839px;font-size:23.2px;color:#666666;letter-spacing:0.536px;-webkit-text-stroke:0.3px #666666;">Apr 22</span><span class="t" style="left:692.92px;top:839px;font-size:23.2px;color:#666666;letter-spacing:0.336px;-webkit-text-stroke:0.3px #666666;">Apr 24</span><span class="t" style="left:878.65px;top:839px;font-size:23.2px;color:#666666;letter-spacing:0.536px;-webkit-text-stroke:0.3px #666666;">Apr 26</span><span class="t" style="left:1064.39px;top:839px;font-size:23.2px;color:#666666;letter-spacing:0.536px;-webkit-text-stroke:0.3px #666666;">Apr 28</span><span class="t" style="left:1250.12px;top:839px;font-size:23.2px;color:#666666;letter-spacing:0.536px;-webkit-text-stroke:0.3px #666666;">Apr 30</span><span class="t" style="left:1432.25px;top:839px;font-size:23.2px;color:#666666;letter-spacing:0.231px;-webkit-text-stroke:0.3px #666666;">May 02</span><span class="t" style="left:1617.99px;top:839px;font-size:23.2px;color:#666666;letter-spacing:0.031px;-webkit-text-stroke:0.3px #666666;">May 04</span><span class="t" style="left:1803.72px;top:839px;font-size:23.2px;color:#666666;letter-spacing:0.231px;-webkit-text-stroke:0.3px #666666;">May 06</span><span class="t" style="left:1989.46px;top:839px;font-size:23.2px;color:#666666;letter-spacing:0.231px;-webkit-text-stroke:0.3px #666666;">May 08</span><span class="t" style="left:2175.19px;top:839px;font-size:23.2px;color:#666666;letter-spacing:0.231px;-webkit-text-stroke:0.3px #666666;">May 10</span><span class="t" style="left:2360.92px;top:839px;font-size:23.2px;color:#666666;letter-spacing:0.231px;-webkit-text-stroke:0.3px #666666;">May 12</span><span class="t" style="left:2546.66px;top:839px;font-size:23.2px;color:#666666;letter-spacing:0.031px;-webkit-text-stroke:0.3px #666666;">May 14</span><span class="t" style="left:2732.39px;top:839px;font-size:23.2px;color:#666666;letter-spacing:0.231px;-webkit-text-stroke:0.3px #666666;">May 16</span><span class="t" style="left:2918.13px;top:839px;font-size:23.2px;color:#666666;letter-spacing:0.231px;-webkit-text-stroke:0.3px #666666;">May 18</span><span class="t" style="left:3103.86px;top:839px;font-size:23.2px;color:#666666;letter-spacing:0.231px;-webkit-text-stroke:0.3px #666666;">May 20</span><span class="t" style="left:226.40px;top:929px;font-size:31.7px;color:#fff;letter-spacing:1.705px;transform:scaleX(0.9000);transform-origin:0 0;">EXPORT</span><span class="t" style="left:363.30px;top:929px;font-size:31.7px;color:#fff;letter-spacing:2.207px;transform:scaleX(0.9000);transform-origin:0 0;">.CSV</span><span class="t" style="left:549.04px;top:929px;font-size:28.2px;color:#333;letter-spacing:1.255px;transform:scaleX(0.8800);transform-origin:0 0;">REFRESH</span><span class="t" style="left:2380.63px;top:931px;font-size:28px;color:#b3b3b3;letter-spacing:-0.500px;transform:scaleX(0.9668);transform-origin:0 0;">Search domains</span><span class="t" style="left:3042.54px;top:929px;font-size:28.2px;color:#333;letter-spacing:1.044px;transform:scaleX(0.8800);transform-origin:0 0;">FILTERS</span><span class="t" style="left:179.80px;top:1022px;font-size:26.3px;color:#333;font-weight:bold;letter-spacing:-0.500px;transform:scaleX(0.8855);transform-origin:0 0;">Time start</span><span class="t" style="left:329.20px;top:1024px;font-size:24px;color:#333;letter-spacing:-0.381px;-webkit-text-stroke:0.3px #333;">April 20, 2025 at 1:37 PM</span><span class="t" style="left:643.10px;top:1022px;font-size:26.3px;color:#333;font-weight:bold;letter-spacing:-0.500px;transform:scaleX(0.9140);transform-origin:0 0;">Time end</span><span class="t" style="left:786.30px;top:1024px;font-size:24px;color:#333;letter-spacing:-0.512px;-webkit-text-stroke:0.3px #333;">May 20, 2025 at 1:37 PM</span><span class="t" style="left:1095.00px;top:1022px;font-size:26.3px;color:#333;font-weight:bold;letter-spacing:-0.500px;transform:scaleX(0.8888);transform-origin:0 0;">Security tags</span><span class="t" style="left:1278.44px;top:1024px;font-size:24px;color:#333;letter-spacing:-0.500px;transform:scaleX(0.9640);transform-origin:0 0;-webkit-text-stroke:0.3px #333;">DGA</span><span class="t" style="left:1429.83px;top:1023px;font-size:26.3px;color:#cc3a16;letter-spacing:-0.500px;transform:scaleX(0.9687);transform-origin:0 0;-webkit-text-stroke:0.3px #cc3a16;">Clear</span><span class="t" style="left:162.13px;top:1106px;font-size:27.2px;color:#2d2d2d;font-weight:bold;letter-spacing:-0.500px;transform:scaleX(0.9743);transform-origin:0 0;-webkit-text-stroke:0.25px #2d2d2d;">Response</span><span class="t" style="left:462.10px;top:1106px;font-size:27.2px;color:#2d2d2d;font-weight:bold;letter-spacing:0.122px;-webkit-text-stroke:0.25px #2d2d2d;">Domain</span><span class="t" style="left:702.80px;top:1106px;font-size:27.2px;color:#2d2d2d;font-weight:bold;letter-spacing:-0.471px;-webkit-text-stroke:0.25px #2d2d2d;">Safe mode</span><span class="t" style="left:881.30px;top:1106px;font-size:27.2px;color:#2d2d2d;font-weight:bold;letter-spacing:-0.113px;-webkit-text-stroke:0.25px #2d2d2d;">Content categories</span><span class="t" style="left:1182.80px;top:1106px;font-size:27.2px;color:#2d2d2d;font-weight:bold;letter-spacing:-0.477px;-webkit-text-stroke:0.25px #2d2d2d;">Security tags</span><span class="t" style="left:1482.10px;top:1106px;font-size:27.2px;color:#2d2d2d;font-weight:bold;letter-spacing:-0.295px;-webkit-text-stroke:0.25px #2d2d2d;">Rejection</span><span class="t" style="left:1662.20px;top:1106px;font-size:27.2px;color:#2d2d2d;font-weight:bold;letter-spacing:-0.242px;-webkit-text-stroke:0.25px #2d2d2d;">Timestamp</span><span class="t" style="left:2181.70px;top:1106px;font-size:27.2px;color:#2d2d2d;font-weight:bold;letter-spacing:-0.259px;-webkit-text-stroke:0.25px #2d2d2d;">Protocol</span><span class="t" style="left:2322.22px;top:1106px;font-size:27.2px;color:#2d2d2d;font-weight:bold;letter-spacing:-0.500px;transform:scaleX(0.9810);transform-origin:0 0;-webkit-text-stroke:0.25px #2d2d2d;">Resolution IP</span><span class="t" style="left:2841.62px;top:1106px;font-size:27.2px;color:#2d2d2d;font-weight:bold;letter-spacing:-0.500px;transform:scaleX(0.9832);transform-origin:0 0;-webkit-text-stroke:0.25px #2d2d2d;">Request IP</span><span class="t" style="left:3146.50px;top:1106px;font-size:27.2px;color:#2d2d2d;font-weight:bold;letter-spacing:-0.500px;transform:scaleX(0.9804);transform-origin:0 0;-webkit-text-stroke:0.25px #2d2d2d;">Actions</span><span class="t" style="left:201.10px;top:1176px;font-size:27.6px;color:#666666;letter-spacing:-0.523px;-webkit-text-stroke:0.3px #666666;">Rejected</span><div class="clip" style="left:463px;top:1170px;width:215.2px;height:41px"><span class="t" style="left:-0.90px;top:6px;font-size:27.6px;color:#3a7bd9;-webkit-text-stroke:0.3px #3a7bd9;letter-spacing:0.206px;">uiendc87843jwef.xyz</span></div><span class="t" style="left:1660.80px;top:1176px;font-size:27.6px;color:#666666;letter-spacing:-0.168px;-webkit-text-stroke:0.3px #666666;">May 20, 2025 at 1:36:27 PM</span><span class="t" style="left:2180.93px;top:1176px;font-size:27.6px;color:#666666;letter-spacing:-0.500px;transform:scaleX(0.8856);transform-origin:0 0;-webkit-text-stroke:0.3px #666666;">HTTPS</span><span class="t" style="left:2842.10px;top:1176px;font-size:27.6px;color:#666666;letter-spacing:-0.405px;-webkit-text-stroke:0.3px #666666;">44.197.227.127</span><span class="t" style="left:1195.26px;top:1173px;font-size:28px;color:#333;letter-spacing:-0.500px;transform:scaleX(0.9690);transform-origin:0 0;-webkit-text-stroke:0.3px #333;">DGA</span><span class="t" style="left:1495.16px;top:1173px;font-size:28px;color:#333;letter-spacing:-0.500px;transform:scaleX(0.9690);transform-origin:0 0;-webkit-text-stroke:0.3px #333;">DGA</span><span class="t" style="left:201.10px;top:1246px;font-size:27.6px;color:#666666;letter-spacing:-0.523px;-webkit-text-stroke:0.3px #666666;">Rejected</span><div class="clip" style="left:463px;top:1240px;width:215.2px;height:41px"><span class="t" style="left:1.10px;top:6px;font-size:27.6px;color:#3a7bd9;-webkit-text-stroke:0.3px #3a7bd9;letter-spacing:-0.130px;">jeklrneyufdf901kfr.com</span></div><span class="t" style="left:1660.80px;top:1246px;font-size:27.6px;color:#666666;letter-spacing:-0.140px;-webkit-text-stroke:0.3px #666666;">May 20, 2025 at 1:34:46 PM</span><span class="t" style="left:2180.93px;top:1246px;font-size:27.6px;color:#666666;letter-spacing:-0.500px;transform:scaleX(0.8856);transform-origin:0 0;-webkit-text-stroke:0.3px #666666;">HTTPS</span><span class="t" style="left:2842.10px;top:1246px;font-size:27.6px;color:#666666;letter-spacing:-0.405px;-webkit-text-stroke:0.3px #666666;">44.197.227.127</span><span class="t" style="left:1195.26px;top:1243px;font-size:28px;color:#333;letter-spacing:-0.500px;transform:scaleX(0.9690);transform-origin:0 0;-webkit-text-stroke:0.3px #333;">DGA</span><span class="t" style="left:1495.16px;top:1243px;font-size:28px;color:#333;letter-spacing:-0.500px;transform:scaleX(0.9690);transform-origin:0 0;-webkit-text-stroke:0.3px #333;">DGA</span><span class="t" style="left:201.10px;top:1316px;font-size:27.6px;color:#666666;letter-spacing:-0.523px;-webkit-text-stroke:0.3px #666666;">Rejected</span><div class="clip" style="left:463px;top:1310px;width:215.2px;height:41px"><span class="t" style="left:0.10px;top:6px;font-size:27.6px;color:#3a7bd9;-webkit-text-stroke:0.3px #3a7bd9;letter-spacing:0.225px;">fueri894jrefdjrf.xyz</span></div><span class="t" style="left:1660.80px;top:1316px;font-size:27.6px;color:#666666;letter-spacing:-0.324px;-webkit-text-stroke:0.3px #666666;">May 20, 2025 at 1:33:12 PM</span><span class="t" style="left:2180.93px;top:1316px;font-size:27.6px;color:#666666;letter-spacing:-0.500px;transform:scaleX(0.8856);transform-origin:0 0;-webkit-text-stroke:0.3px #666666;">HTTPS</span><span class="t" style="left:2842.10px;top:1316px;font-size:27.6px;color:#666666;letter-spacing:-0.405px;-webkit-text-stroke:0.3px #666666;">44.197.227.127</span><span class="t" style="left:1195.26px;top:1313px;font-size:28px;color:#333;letter-spacing:-0.500px;transform:scaleX(0.9690);transform-origin:0 0;-webkit-text-stroke:0.3px #333;">DGA</span><span class="t" style="left:894.60px;top:1313px;font-size:28px;color:#333;letter-spacing:-0.606px;-webkit-text-stroke:0.3px #333;">Unclassifiable</span><div class="clip" style="left:1278px;top:1307px;width:179.7px;height:42px"><span class="t" style="left:12.40px;top:6px;font-size:28px;color:#333;-webkit-text-stroke:0.3px #333;letter-spacing:-0.550px;">Parked domain</span></div><div class="clip" style="left:1482px;top:1307px;width:155.9px;height:42px"><span class="t" style="left:13.00px;top:6px;font-size:28px;color:#333;-webkit-text-stroke:0.3px #333;letter-spacing:-0.550px;">Parked domain</span></div><span class="t" style="left:201.10px;top:1386px;font-size:27.6px;color:#666666;letter-spacing:-0.523px;-webkit-text-stroke:0.3px #666666;">Rejected</span><div class="clip" style="left:463px;top:1380px;width:215.2px;height:41px"><span class="t" style="left:-0.90px;top:6px;font-size:27.6px;color:#3a7bd9;-webkit-text-stroke:0.3px #3a7bd9;letter-spacing:0.176px;">uierfjfre754hjfrer.live</span></div><span class="t" style="left:1660.80px;top:1386px;font-size:27.6px;color:#666666;letter-spacing:-0.324px;-webkit-text-stroke:0.3px #666666;">May 20, 2025 at 1:32:14 PM</span><span class="t" style="left:2180.93px;top:1386px;font-size:27.6px;color:#666666;letter-spacing:-0.500px;transform:scaleX(0.8856);transform-origin:0 0;-webkit-text-stroke:0.3px #666666;">HTTPS</span><span class="t" style="left:2842.10px;top:1386px;font-size:27.6px;color:#666666;letter-spacing:-0.405px;-webkit-text-stroke:0.3px #666666;">44.197.227.127</span><span class="t" style="left:1195.26px;top:1383px;font-size:28px;color:#333;letter-spacing:-0.500px;transform:scaleX(0.9690);transform-origin:0 0;-webkit-text-stroke:0.3px #333;">DGA</span><span class="t" style="left:1495.16px;top:1383px;font-size:28px;color:#333;letter-spacing:-0.500px;transform:scaleX(0.9690);transform-origin:0 0;-webkit-text-stroke:0.3px #333;">DGA</span><span class="t" style="left:201.10px;top:1456px;font-size:27.6px;color:#666666;letter-spacing:-0.523px;-webkit-text-stroke:0.3px #666666;">Rejected</span><div class="clip" style="left:463px;top:1450px;width:215.2px;height:41px"><span class="t" style="left:-0.90px;top:6px;font-size:27.6px;color:#3a7bd9;-webkit-text-stroke:0.3px #3a7bd9;letter-spacing:0.176px;">uierfjfre754hjfrer.live</span></div><span class="t" style="left:1660.80px;top:1456px;font-size:27.6px;color:#666666;letter-spacing:-0.308px;-webkit-text-stroke:0.3px #666666;">May 20, 2025 at 1:31:54 PM</span><span class="t" style="left:2180.93px;top:1456px;font-size:27.6px;color:#666666;letter-spacing:-0.500px;transform:scaleX(0.8856);transform-origin:0 0;-webkit-text-stroke:0.3px #666666;">HTTPS</span><span class="t" style="left:2842.10px;top:1456px;font-size:27.6px;color:#666666;letter-spacing:-0.405px;-webkit-text-stroke:0.3px #666666;">44.197.227.127</span><span class="t" style="left:1195.26px;top:1453px;font-size:28px;color:#333;letter-spacing:-0.500px;transform:scaleX(0.9690);transform-origin:0 0;-webkit-text-stroke:0.3px #333;">DGA</span><span class="t" style="left:1495.16px;top:1453px;font-size:28px;color:#333;letter-spacing:-0.500px;transform:scaleX(0.9690);transform-origin:0 0;-webkit-text-stroke:0.3px #333;">DGA</span><span class="t" style="left:201.10px;top:1526px;font-size:27.6px;color:#666666;letter-spacing:-0.523px;-webkit-text-stroke:0.3px #666666;">Rejected</span><div class="clip" style="left:463px;top:1520px;width:215.2px;height:41px"><span class="t" style="left:1.10px;top:6px;font-size:27.6px;color:#3a7bd9;-webkit-text-stroke:0.3px #3a7bd9;letter-spacing:-0.130px;">jeklrneyufdf901kfr.com</span></div><span class="t" style="left:1660.80px;top:1526px;font-size:27.6px;color:#666666;letter-spacing:-0.308px;-webkit-text-stroke:0.3px #666666;">May 20, 2025 at 1:31:00 PM</span><span class="t" style="left:2180.93px;top:1526px;font-size:27.6px;color:#666666;letter-spacing:-0.500px;transform:scaleX(0.8856);transform-origin:0 0;-webkit-text-stroke:0.3px #666666;">HTTPS</span><span class="t" style="left:2842.10px;top:1526px;font-size:27.6px;color:#666666;letter-spacing:-0.405px;-webkit-text-stroke:0.3px #666666;">44.197.227.127</span><span class="t" style="left:1195.26px;top:1523px;font-size:28px;color:#333;letter-spacing:-0.500px;transform:scaleX(0.9690);transform-origin:0 0;-webkit-text-stroke:0.3px #333;">DGA</span><span class="t" style="left:1495.16px;top:1523px;font-size:28px;color:#333;letter-spacing:-0.500px;transform:scaleX(0.9690);transform-origin:0 0;-webkit-text-stroke:0.3px #333;">DGA</span><span class="t" style="left:201.10px;top:1596px;font-size:27.6px;color:#666666;letter-spacing:-0.523px;-webkit-text-stroke:0.3px #666666;">Rejected</span><div class="clip" style="left:463px;top:1590px;width:215.2px;height:41px"><span class="t" style="left:-0.90px;top:6px;font-size:27.6px;color:#3a7bd9;-webkit-text-stroke:0.3px #3a7bd9;letter-spacing:0.176px;">uierfjfre754hjfrer.live</span></div><span class="t" style="left:1660.80px;top:1596px;font-size:27.6px;color:#666666;letter-spacing:-0.308px;-webkit-text-stroke:0.3px #666666;">May 20, 2025 at 1:30:13 PM</span><span class="t" style="left:2180.93px;top:1596px;font-size:27.6px;color:#666666;letter-spacing:-0.500px;transform:scaleX(0.8856);transform-origin:0 0;-webkit-text-stroke:0.3px #666666;">HTTPS</span><span class="t" style="left:2842.10px;top:1596px;font-size:27.6px;color:#666666;letter-spacing:-0.405px;-webkit-text-stroke:0.3px #666666;">44.197.227.127</span><span class="t" style="left:1195.26px;top:1593px;font-size:28px;color:#333;letter-spacing:-0.500px;transform:scaleX(0.9690);transform-origin:0 0;-webkit-text-stroke:0.3px #333;">DGA</span><span class="t" style="left:1495.16px;top:1593px;font-size:28px;color:#333;letter-spacing:-0.500px;transform:scaleX(0.9690);transform-origin:0 0;-webkit-text-stroke:0.3px #333;">DGA</span><span class="t" style="left:201.10px;top:1666px;font-size:27.6px;color:#666666;letter-spacing:-0.523px;-webkit-text-stroke:0.3px #666666;">Rejected</span><div class="clip" style="left:463px;top:1660px;width:215.2px;height:41px"><span class="t" style="left:1.10px;top:6px;font-size:27.6px;color:#3a7bd9;-webkit-text-stroke:0.3px #3a7bd9;letter-spacing:-0.130px;">jeklrneyufdf901kfr.com</span></div><span class="t" style="left:1660.80px;top:1666px;font-size:27.6px;color:#666666;letter-spacing:-0.308px;-webkit-text-stroke:0.3px #666666;">May 20, 2025 at 1:30:10 PM</span><span class="t" style="left:2180.93px;top:1666px;font-size:27.6px;color:#666666;letter-spacing:-0.500px;transform:scaleX(0.8856);transform-origin:0 0;-webkit-text-stroke:0.3px #666666;">HTTPS</span><span class="t" style="left:2842.10px;top:1666px;font-size:27.6px;color:#666666;letter-spacing:-0.405px;-webkit-text-stroke:0.3px #666666;">44.197.227.127</span><span class="t" style="left:1195.26px;top:1663px;font-size:28px;color:#333;letter-spacing:-0.500px;transform:scaleX(0.9690);transform-origin:0 0;-webkit-text-stroke:0.3px #333;">DGA</span><span class="t" style="left:1495.16px;top:1663px;font-size:28px;color:#333;letter-spacing:-0.500px;transform:scaleX(0.9690);transform-origin:0 0;-webkit-text-stroke:0.3px #333;">DGA</span><span class="t" style="left:201.10px;top:1736px;font-size:27.6px;color:#666666;letter-spacing:-0.523px;-webkit-text-stroke:0.3px #666666;">Rejected</span><div class="clip" style="left:463px;top:1730px;width:215.2px;height:41px"><span class="t" style="left:0.10px;top:6px;font-size:27.6px;color:#3a7bd9;-webkit-text-stroke:0.3px #3a7bd9;letter-spacing:0.225px;">fueri894jrefdjrf.xyz</span></div><span class="t" style="left:1660.80px;top:1736px;font-size:27.6px;color:#666666;letter-spacing:-0.148px;-webkit-text-stroke:0.3px #666666;">May 20, 2025 at 1:29:34 PM</span><span class="t" style="left:2180.93px;top:1736px;font-size:27.6px;color:#666666;letter-spacing:-0.500px;transform:scaleX(0.8856);transform-origin:0 0;-webkit-text-stroke:0.3px #666666;">HTTPS</span><span class="t" style="left:2842.10px;top:1736px;font-size:27.6px;color:#666666;letter-spacing:-0.405px;-webkit-text-stroke:0.3px #666666;">44.197.227.127</span><span class="t" style="left:1195.26px;top:1733px;font-size:28px;color:#333;letter-spacing:-0.500px;transform:scaleX(0.9690);transform-origin:0 0;-webkit-text-stroke:0.3px #333;">DGA</span><span class="t" style="left:894.60px;top:1733px;font-size:28px;color:#333;letter-spacing:-0.606px;-webkit-text-stroke:0.3px #333;">Unclassifiable</span><div class="clip" style="left:1278px;top:1727px;width:179.7px;height:42px"><span class="t" style="left:12.40px;top:6px;font-size:28px;color:#333;-webkit-text-stroke:0.3px #333;letter-spacing:-0.550px;">Parked domain</span></div><div class="clip" style="left:1482px;top:1727px;width:155.9px;height:42px"><span class="t" style="left:13.00px;top:6px;font-size:28px;color:#333;-webkit-text-stroke:0.3px #333;letter-spacing:-0.550px;">Parked domain</span></div></main></body></html>
